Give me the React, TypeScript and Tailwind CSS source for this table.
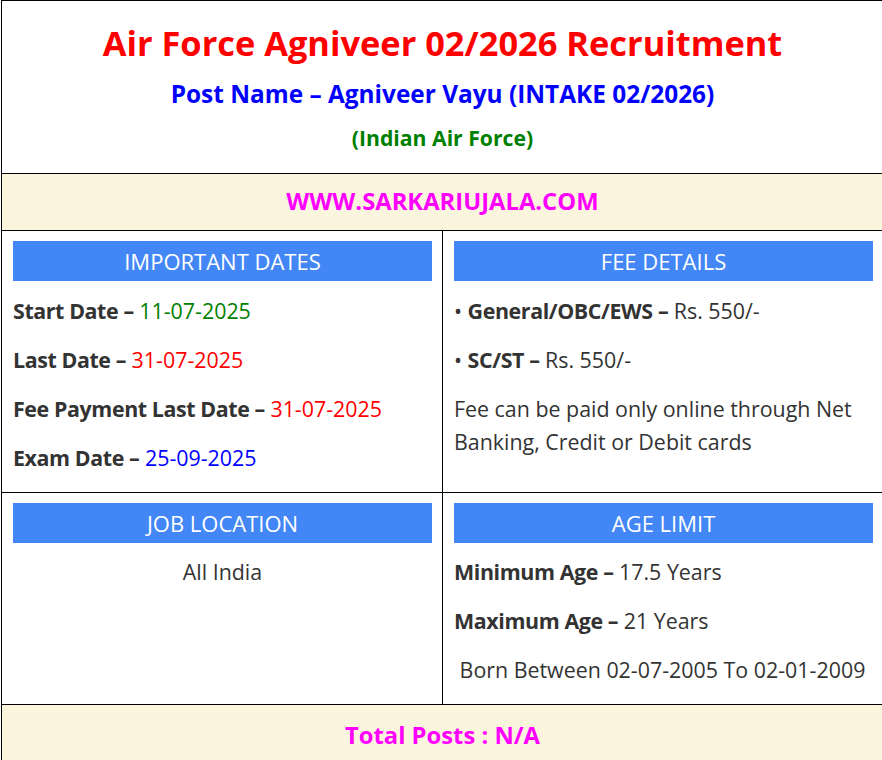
import React from "react";

const body = "text-[21.4px] leading-[33px] text-[#333333]";
const label = "font-bold tracking-[-0.4px]";

function Header({ children }: { children: React.ReactNode }) {
  return (
    <div className="h-[40px] bg-[#4287f5] flex items-center justify-center text-white text-[22px] leading-none">
      {children}
    </div>
  );
}

export default function App() {
  return (
    <div
      className="w-[882px] h-[760px] overflow-hidden bg-white"
      style={{ fontFamily: '"Open Sans", "Noto Sans", sans-serif' }}
    >
      <div className="ml-[1px] w-[883px] border border-black">
        {/* Title block */}
        <div className="pt-[18px] pb-[20px] flex flex-col items-center border-b border-black">
          <h1 className="text-[34.4px] leading-[48px] font-bold text-[#ff0000] whitespace-nowrap">
            Air Force Agniveer 02/2026 Recruitment
          </h1>
          <h2 className="mt-[10px] text-[24.4px] leading-[34px] font-bold text-[#0000ff] whitespace-nowrap">
            Post Name – Agniveer Vayu (INTAKE 02/2026)
          </h2>
          <h3 className="mt-[12px] text-[21.2px] leading-[30px] font-bold text-[#008000] whitespace-nowrap">
            (Indian Air Force)
          </h3>
        </div>

        {/* Website band */}
        <div className="h-[57px] bg-[#fbf5de] flex items-center justify-center border-b border-black">
          <span className="text-[23.8px] font-bold text-[#ff00ff] leading-none">WWW.SARKARIUJALA.COM</span>
        </div>

        {/* Row 1 */}
        <div className="grid grid-cols-[441px_440px] border-b border-black">
          <div className="border-r border-black pt-[10px] pl-[11px] pr-[10px] pb-[18px]">
            <Header>IMPORTANT DATES</Header>
            <div className={`mt-[13px] flex flex-col gap-[16px] ${body}`}>
              <p>
                <span className={label}>Start Date –</span> <span className="text-[#008000]">11-07-2025</span>
              </p>
              <p>
                <span className={label}>Last Date –</span> <span className="text-[#ff0000]">31-07-2025</span>
              </p>
              <p>
                <span className={label}>Fee Payment Last Date –</span>{" "}
                <span className="text-[#ff0000]">31-07-2025</span>
              </p>
              <p>
                <span className={label}>Exam Date –</span> <span className="text-[#0000ff]">25-09-2025</span>
              </p>
            </div>
          </div>
          <div className="pt-[10px] pl-[11px] pr-[10px] pb-[18px]">
            <Header>FEE DETAILS</Header>
            <div className={`mt-[13px] flex flex-col gap-[16px] ${body}`}>
              <p>
                • <span className={label}>General/OBC/EWS –</span> Rs. 550/-
              </p>
              <p>
                • <span className={label}>SC/ST –</span> Rs. 550/-
              </p>
              <p>Fee can be paid only online through Net Banking, Credit or Debit cards</p>
            </div>
          </div>
        </div>

        {/* Row 2 */}
        <div className="grid grid-cols-[441px_440px] border-b border-black">
          <div className="border-r border-black pt-[10px] pl-[11px] pr-[10px] pb-[17px]">
            <Header>JOB LOCATION</Header>
            <div className={`mt-[12px] ${body} text-center`}>
              <p>All India</p>
            </div>
          </div>
          <div className="pt-[10px] pl-[11px] pr-[10px] pb-[18px]">
            <Header>AGE LIMIT</Header>
            <div className={`mt-[12px] flex flex-col gap-[16px] ${body}`}>
              <p>
                <span className={label}>Minimum Age –</span> 17.5 Years
              </p>
              <p>
                <span className={label}>Maximum Age –</span> 21 Years
              </p>
              <p className="whitespace-nowrap">{"\u00a0"}Born Between 02-07-2005 To 02-01-2009</p>
            </div>
          </div>
        </div>

        {/* Total posts band */}
        <div className="h-[57px] pt-[4px] bg-[#fbf5de] flex items-center justify-center">
          <span className="text-[23.8px] font-bold text-[#ff00ff] leading-none">Total Posts : N/A</span>
        </div>
      </div>
    </div>
  );
}
